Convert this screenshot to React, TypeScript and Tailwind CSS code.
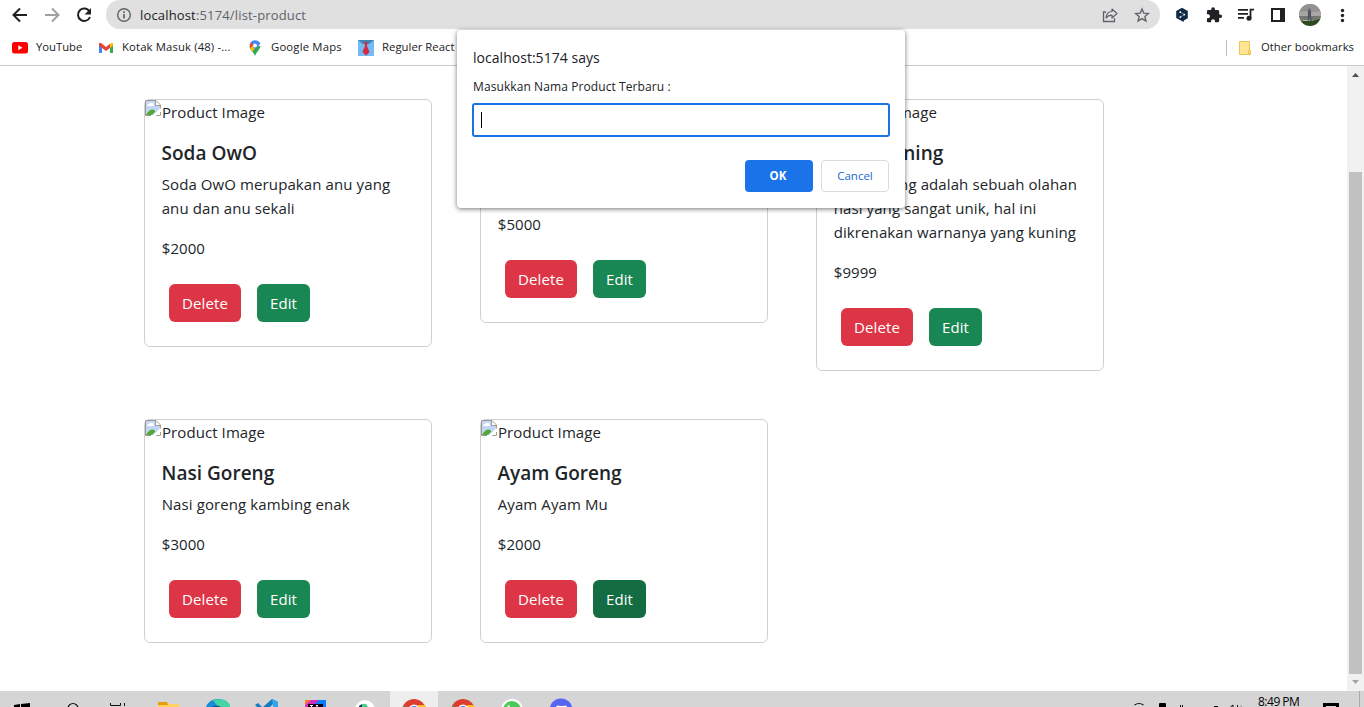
import React from "react";

type Product = {
  id: number;
  name: string;
  description: string[];
  price: number;
  editActive?: boolean;
};

const products: Product[] = [
  { id: 1, name: "Soda OwO", description: ["Soda OwO merupakan anu yang", "anu dan anu sekali"], price: 2000 },
  { id: 2, name: "", description: [""], price: 5000 },
  {
    id: 3,
    name: "Nasi Kuning",
    description: ["Nasi kuning adalah sebuah olahan", "nasi yang sangat unik, hal ini", "dikrenakan warnanya yang kuning"],
    price: 9999,
  },
  { id: 4, name: "Nasi Goreng", description: ["Nasi goreng kambing enak"], price: 3000 },
  { id: 5, name: "Ayam Goreng", description: ["Ayam Ayam Mu"], price: 2000, editActive: true },
];

function BrokenImage() {
  return (
    <svg width="16" height="16" viewBox="0 0 16 16" className="shrink-0">
      <path d="M0 0h11l5 5v11H0z" fill="#fff" />
      <path d="M1 1h10v5h4v3L8 15H1z" fill="#c3d6f6" />
      <path d="M2 6q0-2 2-2 1-2 3-1 2 0 2 2v1z" fill="#fff" />
      <path d="M1 15q3-5.500 6.500-5.500 2 0 3 2L7 15z" fill="#54a83a" />
      <path d="M.5 15.500V.500h10.500l4.500 4.500v4M10.500.500v5h5M.500 15.500H6M11 15.500h4.500V12" fill="none" stroke="#9b9b9b" />
      <path d="M16 8v3l-5 5H7z" fill="#fff" />
    </svg>
  );
}

function ProductCard({ product }: { product: Product }) {
  return (
    <article className="w-72 rounded-md border border-[#d0d0d0] bg-white text-[#212529]">
      <div className="flex h-6 items-start text-[15px] leading-6 tracking-[0.08px]">
        <BrokenImage />
        <span className="pl-px">Product Image</span>
      </div>
      <div className="p-4">
        <h5 className="mb-2 h-6 pl-[0.5px] text-[19px] leading-[26px] font-semibold tracking-[0.02px]">{product.name}</h5>
        <p className="mb-4 pl-[0.7px] text-[15px] leading-6 tracking-[0.1px]">
          {product.description.map((line) => (
            <span key={line} className="block min-h-6 whitespace-nowrap">{line}</span>
          ))}
        </p>
        <p className="mb-4 pl-[0.8px] text-[15px] leading-6 tracking-[0.05px]">${product.price}</p>
        <div className="flex gap-4 p-2 text-[15px] tracking-[0.1px] text-white">
          <button className="h-[38px] w-[72px] rounded-md bg-[#dc3545] pt-px">Delete</button>
          <button className={product.editActive ? "h-[38px] w-[53px] rounded-md bg-[#146c43] pt-px" : "h-[38px] w-[53px] rounded-md bg-[#198754] pt-px"}>
            Edit
          </button>
        </div>
      </div>
    </article>
  );
}

function Toolbar() {
  return (
    <div className="flex h-[29px] items-center">
      <svg width="106" height="29" viewBox="0 0 106 29" fill="none" className="shrink-0">
        <path d="M27 15H14M20 8.500L13.500 15l6.500 6.500" stroke="#202124" strokeWidth="2" />
        <path d="M45 15h13M52 8.500l6.500 6.500-6.500 6.500" stroke="#a0a0a0" strokeWidth="2" />
        <path d="M89.500 11.500A6.200 6.200 0 1 0 90 17" stroke="#202124" strokeWidth="2" />
        <path d="M91 8v6.500h-6.500z" fill="#202124" />
      </svg>
      <div className="flex h-[29px] w-[1054px] items-center rounded-b-[14px] rounded-t-[14px] bg-[#e0e0e0]">
        <svg width="34" height="29" viewBox="0 0 34 29" fill="none" className="shrink-0">
          <circle cx="18" cy="15" r="6.300" stroke="#5f6368" strokeWidth="1.400" />
          <path d="M18 14v4.500M18 11.300v1.700" stroke="#5f6368" strokeWidth="1.700" />
        </svg>
        <span className="flex-1 pt-px text-[13px] leading-5 tracking-[0.16px] text-[#5f6368]">
          <span className="text-[#202124]">localhost</span>:5174/list-product
        </span>
        <svg width="60" height="29" viewBox="1100 0 60 29" fill="none" className="shrink-0">
          <path d="M1106 12h-2.500v9.500h11V18" stroke="#5f6368" strokeWidth="1.300" />
          <path d="M1106 18q.500-6.500 6-6.500V9l5 4.500-5 4.500v-2.800q-4 0-6 2.800z" stroke="#5f6368" strokeWidth="1.200" strokeLinejoin="round" />
          <path d="M1142 9l1.800 4.200 4.500.400-3.400 3 1 4.400-3.900-2.400-3.900 2.400 1-4.400-3.400-3 4.500-.400z" stroke="#5f6368" strokeWidth="1.400" />
        </svg>
      </div>
      <svg width="204" height="29" viewBox="1160 0 204 29" className="shrink-0">
        <defs>
          <clipPath id="avatar"><circle cx="1310" cy="15" r="11" /></clipPath>
        </defs>
        <path d="M1182 7.800l5.800 3.200v7.200l-4 2.300V22l-2.500-1.300-5.100-2.800V11z" fill="#0f2b46" />
        <path d="M1180 12l4.500 2.500-4.500 2.800" fill="none" stroke="#9fb0c2" strokeWidth=".7" />
        <circle cx="1180.300" cy="12.200" r=".9" fill="#fff" />
        <circle cx="1184.300" cy="14.600" r=".9" fill="#fff" />
        <circle cx="1180.300" cy="17.100" r=".9" fill="#fff" />
        <g transform="translate(1205.500 6.500) scale(.72)">
          <path d="M20.500 11H19V7c0-1.100-.9-2-2-2h-4V3.500a2.500 2.500 0 0 0-5 0V5H4a2 2 0 0 0-2 2v3.800h1.500c1.500 0 2.700 1.200 2.700 2.700S5 16.200 3.500 16.200H2V20c0 1.100.9 2 2 2h3.800v-1.500c0-1.500 1.200-2.700 2.700-2.700s2.700 1.200 2.700 2.700V22H17a2 2 0 0 0 2-2v-4h1.500a2.500 2.500 0 0 0 0-5z" fill="#202124" />
        </g>
        <path d="M1238 9.800h10M1238 13.800h10M1238 17.800h6" stroke="#202124" strokeWidth="1.800" />
        <path d="M1250.500 18V9.700h3.500" fill="none" stroke="#202124" strokeWidth="1.800" />
        <circle cx="1249" cy="18.300" r="2.500" fill="#202124" />
        <path d="M1271 8h14v14h-14z" fill="#202124" />
        <path d="M1273 10h7v10h-7z" fill="#fff" />
        <g clipPath="url(#avatar)">
          <path d="M1299 4h22v11h-22z" fill="#85888a" />
          <path d="M1299 4h22v6l-7 2-6-3-9 4z" fill="#939292" />
          <path d="M1299 12l6-1 5 1 11-1v6h-22z" fill="#aaa5a2" />
          <path d="M1299 16h22v4h-22z" fill="#74766f" />
          <path d="M1299 20q10 2 22-1v9h-22z" fill="#2d4a21" />
          <path d="M1308 11h3v5l1 5h-1.300l-1-4-1 4h-1z" fill="#4d5663" />
          <circle cx="1309.500" cy="9.800" r="1.200" fill="#66605d" />
        </g>
        <circle cx="1342.500" cy="10.500" r="1.700" fill="#202124" />
        <circle cx="1342.500" cy="15.500" r="1.700" fill="#202124" />
        <circle cx="1342.500" cy="20.500" r="1.700" fill="#202124" />
      </svg>
    </div>
  );
}

function BookmarksBar() {
  return (
    <div className="flex h-9 items-center border-b border-[#c9cacc] pl-3 text-[11.300px] text-[#202124] whitespace-nowrap">
      <svg width="16" height="16" viewBox="0 0 16 16" className="shrink-0">
        <rect y="2" width="16" height="11.500" rx="2.500" fill="#f00" />
        <path d="M6.300 5.300v5l4.200-2.500z" fill="#fff" />
      </svg>
      <span className="ml-2 w-[62px] tracking-[-0.03px]">YouTube</span>
      <svg width="16" height="16" viewBox="0 0 16 16" className="shrink-0">
        <path d="M1 4v9h3V7z" fill="#4285f4" />
        <path d="M12 7v6h3V4z" fill="#34a853" />
        <path d="M12 4.500V8l3-2.200V4q0-2-2-1z" fill="#fbbc04" />
        <path d="M1 4q0-2 2-1l5 4 4-3.200V8l-4 3-4-3-3-2.200z" fill="#ea4335" />
      </svg>
      <span className="ml-2 w-[125px] tracking-[0.14px]">Kotak Masuk (48) -...</span>
      <svg width="16" height="16" viewBox="0 0 16 16" className="shrink-0">
        <path d="M2.500 6q0 3 2.500 5.300Q7 13.500 8 16q1-3 3-5 2.500-3 2.500-5z" fill="#34a853" />
        <path d="M3 8q1 2 2.500 3.500L10 6H5z" fill="#fbbc04" />
        <path d="M3.500 2.600Q5.300.200 8 .2q3.800 0 5.300 3.600L8 9.500l-2-3z" fill="#4285f4" />
        <path d="M3.500 2.600Q2 5 3 8l3.500-3z" fill="#ea4335" />
        <circle cx="8" cy="5.500" r="2" fill="#fff" />
      </svg>
      <span className="ml-2 w-[87px] tracking-[0.18px]">Google Maps</span>
      <svg width="16" height="16" viewBox="0 0 16 16" className="shrink-0">
        <path d="M0 0h16v16H0z" fill="#74baf3" />
        <path d="M0 0h16L11 4H5z" fill="#3f83b4" />
        <path d="M6.500 2h3L9 6l2.500 6L8 15.500 4.500 12 7 6z" fill="#d9283f" />
      </svg>
      <span className="ml-2 tracking-[0.03px]">Reguler React</span>
      <div className="ml-auto mr-[10px] flex items-center">
        <div className="h-4 w-px bg-[#babcbe]" />
        <svg width="16" height="16" viewBox="0 0 16 16" className="ml-[11px] shrink-0">
          <path d="M1.500 1.500h10v9h1v4h-11z" fill="#ffe591" stroke="#eac54f" />
          <path d="M10.500 14v-3.500h2V14z" fill="#ffe591" stroke="#eac54f" />
        </svg>
        <span className="ml-[7px] tracking-[0.02px]">Other bookmarks</span>
      </div>
    </div>
  );
}

function PromptDialog() {
  return (
    <div className="absolute left-[457px] top-[30px] h-[178px] w-[448px] rounded-[4px] bg-white px-4 pt-[17px] text-[#202124] shadow-[0_1px_5px_rgba(0,0,0,0.55)]">
      <div className="text-[14px] leading-[22px] tracking-[0.03px]">localhost:5174 says</div>
      <div className="mt-[10px] text-[12px] leading-4 tracking-[0.09px]">Masukkan Nama Product Terbaru :</div>
      <div className="-mx-px mt-2 flex h-[34px] w-[418px] items-center rounded-[3px] border-2 border-[#1a73e8] pl-[7px]">
        <div className="h-4 w-px bg-black" />
      </div>
      <div className="mt-[23px] flex justify-end gap-2 text-[11.500px]">
        <button className="h-8 w-[68px] rounded-[4px] bg-[#1a73e8] pr-[2px] font-bold text-white">OK</button>
        <button className="h-8 w-[68px] rounded-[4px] border border-[#dadce0] bg-white font-medium text-[#1967d2]">Cancel</button>
      </div>
    </div>
  );
}

function Taskbar() {
  return (
    <div className="flex h-4 shrink-0 bg-[#d5d5d5]">
      <svg width="1250" height="16" viewBox="0 691 1250 16" className="shrink-0">
        <path d="M390 691h48v16h-48z" fill="#eee" />
        <path d="M14 705l6-1v3h-6zM21 704l9-1v4h-9z" fill="#000" />
        <circle cx="73" cy="708.500" r="5" fill="none" stroke="#111" strokeWidth="1.200" />
        <path d="M110.500 703v2.500h10V703M124.500 703v3" fill="none" stroke="#111" />
        <path d="M158 702h9l2 2h10v3h-21z" fill="#ffd35b" />
        <path d="M158 702h9l1 3h-10z" fill="#e69b07" />
        <path d="M206 707q3-8 12-8 10 0 12 8z" fill="#168ed4" />
        <path d="M213 700q15-3 17 7h-12z" fill="#43d5a3" />
        <path d="M211 707q6-3 10 0z" fill="#0c519a" />
        <path d="M255 705l3-2 4 4h-5zM263 707l9-8 6 3v5h-5v-3l-3 3z" fill="#127bc2" />
        <path d="M272 699l6 3v5h-5z" fill="#31a5ed" />
        <path d="M305 700h10l-10 7z" fill="#ff7b29" />
        <path d="M315 700h11v7h-20z" fill="#087cfa" />
        <path d="M305 705l6-5h8l-8 7h-6z" fill="#d72cc0" />
        <path d="M308 704h15v3h-15z" fill="#170014" />
        <path d="M310 705.500h3M311.500 705v2M316 705.500h2M317 705v2" stroke="#fff" strokeWidth="1" />
        <circle cx="365" cy="710" r="10" fill="#fff" />
        <path d="M360 707q2-4 6-3l2 3z" fill="#44cf8b" />
        <path d="M359 706l3-2v3h-3z" fill="#153b4f" />
        {[414, 463].map((x) => (
          <g key={x}>
            <circle cx={x} cy="711" r="12" fill="#dd3d2e" />
            <path d={`M${x + 4} 705h7l1 2h-8z`} fill="#fbc116" />
            <path d={`M${x - 11} 706h2l1 1h-3z`} fill="#2da94f" />
            <circle cx={x} cy="710" r="5.500" fill="#fff" />
            <circle cx={x} cy="710" r="4" fill="#4285f4" />
          </g>
        ))}
        <circle cx="512" cy="710" r="11" fill="#fff" />
        <circle cx="512" cy="710" r="9" fill="#4bca5b" />
        <path d="M507.500 707q0-2 1.500-2l1 2z" fill="#fff" />
        <circle cx="561" cy="710" r="11.500" fill="#5865f2" />
        <path d="M556 707l1-1.500 3 .5h3l3-.5 1 1.500z" fill="#fff" />
        <path d="M1134.500 705q4.500-3 9 0" fill="none" stroke="#111" strokeWidth="1.100" />
        <rect x="1159" y="703" width="7" height="6" rx="1" fill="#000" />
        <path d="M1180.500 705v2M1182.500 705v2M1214 706.500h4M1230.500 707l2.500-2v2M1237.500 705v2" stroke="#111" fill="none" />
        <path d="M1240.500 705l1 2" stroke="#999" />
      </svg>
      <div className="flex h-4 w-[114px]">
        <span className="w-[72px] pl-2 pt-[3px] text-[12px] leading-4 tracking-[-0.50px] text-black whitespace-nowrap">8:49 PM</span>
        <svg width="42" height="16" viewBox="1322 691 42 16" className="shrink-0">
          <path d="M1324.500 708v-3.500h13v3.500" fill="none" stroke="#000" strokeWidth="3" />
          <path d="M1359.500 691v16" stroke="#aaa" />
        </svg>
      </div>
    </div>
  );
}

export default function App() {
  return (
    <div className="relative flex h-[707px] w-[1364px] flex-col overflow-hidden bg-white font-['Open_Sans','Noto_Sans',sans-serif]">
      <Toolbar />
      <div className="h-px" />
      <BookmarksBar />
      <div className="flex h-[625px]">
        <main className="grid flex-1 grid-cols-[288px_288px_288px] content-start items-start gap-12 pl-36 pt-[33px]">
          {products.map((product) => (
            <ProductCard key={product.id} product={product} />
          ))}
        </main>
        <div className="flex w-[17px] flex-col items-center bg-[#f1f1f1]">
          <svg width="17" height="106" viewBox="0 0 17 106"><path d="M5 11h7L8.500 7z" fill="#505050" /></svg>
          <div className="h-[502px] w-[13px] bg-[#c1c1c1]" />
          <svg width="17" height="17" viewBox="0 0 17 17"><path d="M5 6h7L8.500 10z" fill="#a3a3a3" /></svg>
        </div>
      </div>
      <Taskbar />
      <PromptDialog />
    </div>
  );
}
